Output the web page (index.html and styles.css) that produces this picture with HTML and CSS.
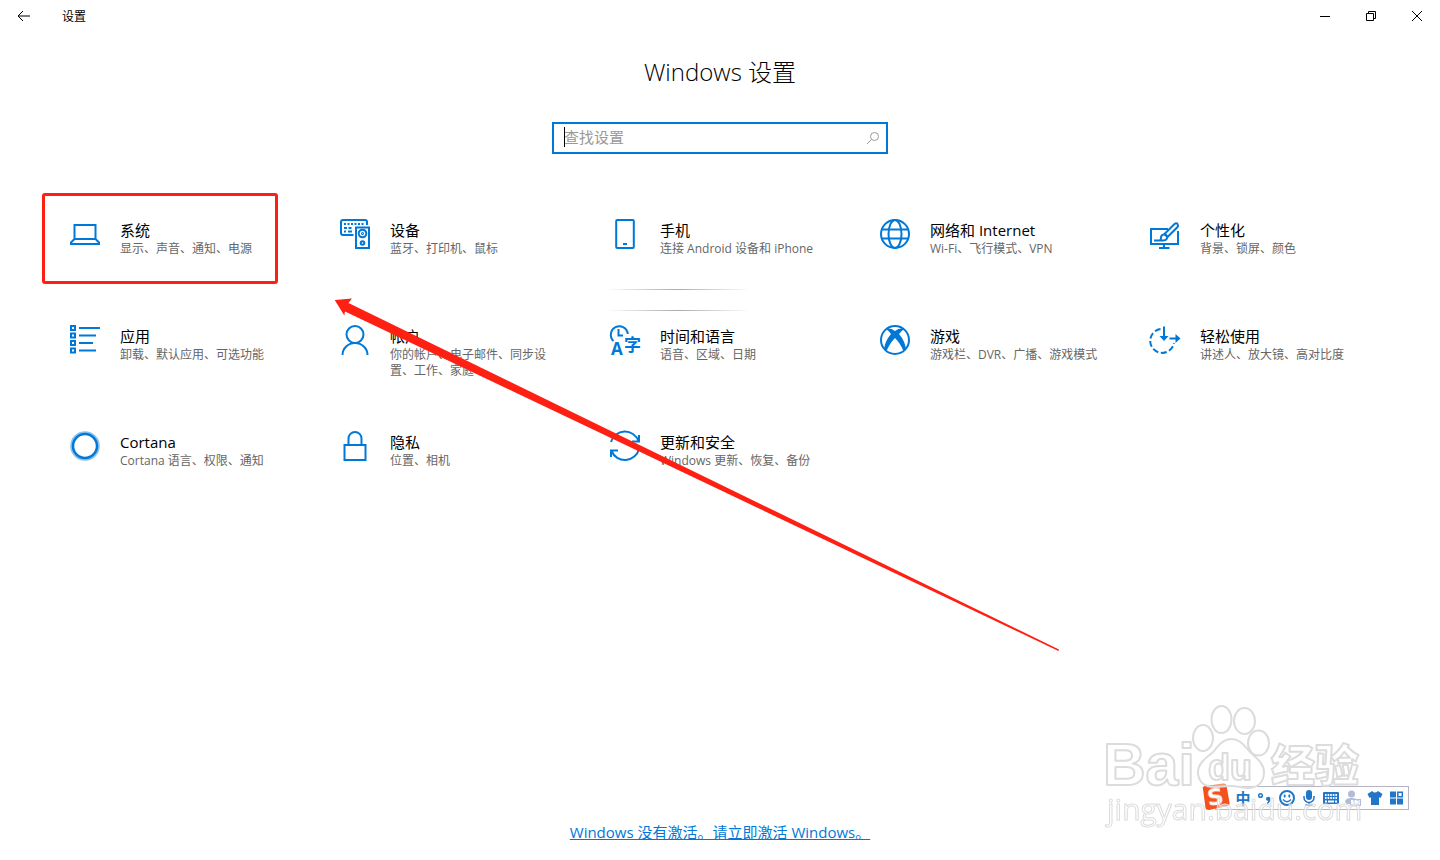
FILE: index.html
```
<!DOCTYPE html>
<html lang="zh-CN">
<head>
  <meta charset="UTF-8">
  <meta name="viewport" content="width=device-width, initial-scale=1">
  <title>设置</title>
  <link rel="stylesheet" href="styles.css">
</head>
<body>
  <header class="title-bar">
    <button class="back-btn" aria-label="返回">
      <svg width="14" height="12" viewBox="0 0 14 12"><path d="M1 6h12M6 1L1 6l5 5"/></svg>
    </button>
    <span class="window-title">设置</span>
    <div class="window-actions">
      <button aria-label="最小化"><svg width="10" height="10" viewBox="0 0 10 10"><path d="M0 5.5h10"/></svg></button>
      <button aria-label="还原"><svg width="10" height="10" viewBox="0 0 10 10"><path d="M.5 2.5h7v7h-7zM2.5 2.5v-2h7v7h-2"/></svg></button>
      <button aria-label="关闭"><svg width="10" height="10" viewBox="0 0 10 10"><path d="M0 0l10 10M10 0L0 10"/></svg></button>
    </div>
  </header>

  <main class="settings">
    <h1>Windows 设置</h1>
    <div class="search-box">
      <input type="text" placeholder="查找设置" aria-label="查找设置">
      <span class="caret"></span>
      <svg class="search-icon" width="12" height="12" viewBox="0 0 12 12"><circle cx="7.5" cy="4.5" r="4"/><path d="M4.5 7.5L0 12"/></svg>
    </div>

    <nav class="tile-grid">
      <a class="tile marked" href="#system">
        <svg class="icon" viewBox="0 0 30 30"><path d="M4.5 6h21v14h-21zM4.5 20L1 23.5V25h28v-1.5L25.5 20"/></svg>
        <span class="tile-text"><span class="tile-title">系统</span><span class="tile-desc">显示、声音、通知、电源</span></span>
      </a>
      <a class="tile" href="#devices">
        <svg class="icon" viewBox="0 0 30 30">
          <path d="M13.5 16H3a2 2 0 0 1-2-2V3a2 2 0 0 1 2-2h22a2 2 0 0 1 2 2v3"/>
          <path d="M4 5h21" stroke-dasharray="2 1.5"/>
          <path d="M4 9h3M8.5 9h3M4 12.5h2M8 12.5h4"/>
          <path d="M16 8.5h13V29H16z"/>
          <circle cx="22.5" cy="14.5" r="3.8"/><circle cx="22.5" cy="14.5" r=".5"/>
          <circle cx="22.5" cy="24" r="1.8"/>
        </svg>
        <span class="tile-text"><span class="tile-title">设备</span><span class="tile-desc">蓝牙、打印机、鼠标</span></span>
      </a>
      <a class="tile" href="#phone">
        <svg class="icon" viewBox="0 0 30 30"><rect x="6.2" y="1" width="17.6" height="28" rx="1"/><path d="M13 25h4"/></svg>
        <span class="tile-text"><span class="tile-title">手机</span><span class="tile-desc">连接 Android 设备和 iPhone</span></span>
      </a>
      <a class="tile" href="#network">
        <svg class="icon" viewBox="0 0 30 30"><circle cx="15" cy="15" r="14"/><ellipse cx="15" cy="15" rx="6.5" ry="14"/><path d="M2 10.5h26M2 19.5h26"/></svg>
        <span class="tile-text"><span class="tile-title">网络和 Internet</span><span class="tile-desc">Wi-Fi、飞行模式、VPN</span></span>
      </a>
      <a class="tile" href="#personal">
        <svg class="icon" viewBox="0 0 30 30">
          <path d="M18 10H1v15h27V12M14 25v4M9 29h10.5"/>
          <path d="M14.5 15L24.5 5q2-1.500 3 0t0 3L17.5 18z"/>
          <path d="M4 21.500h9c4 0 5-3 3.500-5s-5.500-1-5.500 2-1 3-3 3"/>
        </svg>
        <span class="tile-text"><span class="tile-title">个性化</span><span class="tile-desc">背景、锁屏、颜色</span></span>
      </a>

      <a class="tile" href="#apps">
        <svg class="icon" viewBox="0 0 30 30"><path d="M1 1h4v4H1zM1 8.5h4v4H1zM1 16h4v4H1zM1 23.5h4v4H1zM9 3h21M9 10.5h17M9 18h14M9 25.5h17"/></svg>
        <span class="tile-text"><span class="tile-title">应用</span><span class="tile-desc">卸载、默认应用、可选功能</span></span>
      </a>
      <a class="tile" href="#accounts">
        <svg class="icon" viewBox="0 0 30 30"><circle cx="15" cy="9.5" r="8.5"/><path d="M2.5 30a12.5 12 0 0 1 25 0"/></svg>
        <span class="tile-text"><span class="tile-title">帐户</span><span class="tile-desc">你的帐户、电子邮件、同步设置、工作、家庭</span></span>
      </a>
      <a class="tile" href="#time">
        <svg class="icon" viewBox="0 0 30 30">
          <path d="M3.5 16A8.5 8.5 0 1 1 17.8 9M8.5 4v6.5H13"/>
          <text x="1" y="30" font-size="17">A</text><text x="14" y="26" font-size="17">字</text>
        </svg>
        <span class="tile-text"><span class="tile-title">时间和语言</span><span class="tile-desc">语音、区域、日期</span></span>
      </a>
      <a class="tile" href="#gaming">
        <svg class="icon" viewBox="0 0 30 30">
          <circle cx="15" cy="15" r="14"/>
          <path class="solid" d="M6 4Q10 2.5 15 6Q20 2.5 24 4Q22 5.5 19 9Q25 16 26 24L23.5 26Q20 18 15 13Q10 18 6.5 26L4 24Q5 16 11 9Q8.5 5.5 6 4z"/>
        </svg>
        <span class="tile-text"><span class="tile-title">游戏</span><span class="tile-desc">游戏栏、DVR、广播、游戏模式</span></span>
      </a>
      <a class="tile" href="#ease">
        <svg class="icon" viewBox="0 0 30 30">
          <path d="M10.5 4A12 12 0 1 0 24 18" stroke-dasharray="6 2.6"/>
          <path d="M14 1.5V12M19.5 13.5H28"/>
          <path class="solid" d="M9.500 11h9L14 16zM25.500 9l5 4.500-5 4.500z"/>
        </svg>
        <span class="tile-text"><span class="tile-title">轻松使用</span><span class="tile-desc">讲述人、放大镜、高对比度</span></span>
      </a>

      <a class="tile" href="#cortana">
        <svg class="icon" viewBox="0 0 30 30"><circle cx="15" cy="15" r="13.8" opacity=".45"/><circle cx="15" cy="15" r="12" stroke-width="2.5"/></svg>
        <span class="tile-text"><span class="tile-title">Cortana</span><span class="tile-desc">Cortana 语言、权限、通知</span></span>
      </a>
      <a class="tile" href="#privacy">
        <svg class="icon" viewBox="0 0 30 30"><path d="M4.5 14h21v15h-21zM8.5 14V7.5a6.5 6.5 0 0 1 13 0V14"/></svg>
        <span class="tile-text"><span class="tile-title">隐私</span><span class="tile-desc">位置、相机</span></span>
      </a>
      <a class="tile" href="#update">
        <svg class="icon" viewBox="0 0 30 30"><path d="M1 11A14.5 14.5 0 0 1 28.5 10M29 4v6.5h-7M29 18A14.5 14.5 0 0 1 1.5 20M1 26v-6.5h7"/></svg>
        <span class="tile-text"><span class="tile-title">更新和安全</span><span class="tile-desc">Windows 更新、恢复、备份</span></span>
      </a>

      <span class="shade-lines"></span>
      <svg class="arrow" width="726" height="354" viewBox="335 298 726 354">
        <path d="M334.7 300L352 298.500L348.5 303L1059 649.5L1058.5 651L345 311.500L344.3 315.5z"/>
      </svg>
    </nav>

    <a class="activate" href="#activate">Windows 没有激活。请立即激活 Windows。</a>
  </main>

  <!-- 输入法工具栏 -->
  <div class="ime-bar">
    <svg class="ime-logo" width="28" height="28" viewBox="0 0 28 28">
      <path d="M1 6Q0 3.5 3 3L21 .5q3-.5 3.5 2l3 17q.5 3-2.5 3.500L7 27q-3 .5-3.5-2z"/>
      <text x="5" y="22" transform="rotate(-8 14 14)">S</text>
    </svg>
    <button class="ime-lang">中</button>
    <button aria-label="标点"><svg width="16" height="16" viewBox="0 0 16 16"><circle cx="3.5" cy="5.5" r="1.8" fill="none" stroke="currentColor" stroke-width="1.5"/><path d="M9 9a2.200 2.200 0 1 1 4.400 0q0 3.500-3.400 5v-1.500q1.300-.8 1.300-1.800Q9 11 9 9z"/></svg></button>
    <button aria-label="表情"><svg width="16" height="16" viewBox="0 0 16 16"><circle cx="8" cy="8" r="7" fill="none" stroke="currentColor" stroke-width="2"/><ellipse cx="5.7" cy="6" rx="1" ry="1.8"/><ellipse cx="10.3" cy="6" rx="1" ry="1.8"/><path d="M4 9.5q4 4.5 8 0" fill="none" stroke="currentColor" stroke-width="1.3"/></svg></button>
    <button aria-label="语音"><svg width="16" height="16" viewBox="0 0 16 16"><rect x="5" y="0" width="6" height="10" rx="3"/><path d="M3 6v1.5a5 5 0 0 0 10 0V6M8 12v3M4.5 15h7" fill="none" stroke="currentColor" stroke-width="1.5"/></svg></button>
    <button aria-label="键盘"><svg width="16" height="16" viewBox="0 0 16 16"><rect x="0" y="2" width="16" height="12" rx="1"/><path d="M2 5h12M2 8h12" stroke="#fff" stroke-width="2" stroke-dasharray="1.6 1"/><path d="M2 11.5h2M5 11.5h6M12 11.5h2" stroke="#fff" stroke-width="2"/></svg></button>
    <button class="ime-user" aria-label="用户"><svg width="16" height="16" viewBox="0 0 16 16"><circle cx="6.5" cy="4" r="3.5"/><path d="M0 12q0-4 6.5-4t6.5 4l-2 2H2z"/><rect x="5.5" y="9.5" width="10" height="6" fill="#fff" stroke="currentColor"/><text x="7" y="15" font-size="7">12</text></svg></button>
    <button aria-label="皮肤"><svg width="16" height="16" viewBox="0 0 16 16"><path d="M5 1q3 3 6 0l4.5 3-2 4-1.5-.8V15H4V7.2L2.5 8l-2-4z"/></svg></button>
    <button aria-label="工具箱"><svg width="16" height="16" viewBox="0 0 16 16"><path d="M1 1.500h6v6H1zM1 8.500h6v6H1zM8 8.500h6v6H8z"/><path d="M8.800 2.300h4.500v4.500H8.800z" fill="none" stroke="currentColor" stroke-width="1.5"/></svg></button>
  </div>

  <svg class="watermark" width="270" height="134" viewBox="1100 700 270 134">
    <ellipse cx="1203" cy="738" rx="10" ry="13"/>
    <ellipse cx="1221.5" cy="719.5" rx="10" ry="13.5"/>
    <ellipse cx="1244.5" cy="721" rx="10.5" ry="13"/>
    <ellipse cx="1258.5" cy="743" rx="10.5" ry="12.5"/>
    <path d="M1231 739c-9 0-14 9-18 13s-15 10-15 20c0 11 8 15 16 15 6 0 11-1 17-1s12 2 17 2c9 0 16-5 16-16 0-9-9-15-14-20s-9-13-19-13z"/>
    <text class="wm-bai" x="1103" y="785">Bai</text>
    <text class="wm-du" x="1208" y="780">du</text>
    <text class="wm-cn" x="1271" y="782">经验</text>
    <text class="wm-url" x="1107" y="820">jingyan.baidu.com</text>
  </svg>
</body>
</html>
```

FILE: styles.css
```
*,
*::after {
  box-sizing: border-box;
}

body {
  margin: 0;
  min-height: 100vh;
  display: flex;
  flex-direction: column;
  font-family: "Open Sans", "Noto Sans CJK SC", sans-serif;
  font-size: 12px;
  color: #000;
  background: #fff;
}

button {
  padding: 0;
  border: none;
  background: none;
  font: inherit;
  color: inherit;
}

/* 标题栏 */
.title-bar {
  display: flex;
  align-items: center;
  height: 32px;
}

.title-bar button {
  display: flex;
  align-items: center;
  justify-content: center;
  width: 46px;
  height: 32px;
}

.title-bar svg {
  fill: none;
  stroke: #000;
}

.title-bar .back-btn {
  width: 48px;
}

.window-title {
  margin-left: 14px;
}

.window-actions {
  display: flex;
  margin-left: auto;
}

/* 主体 */
.settings {
  flex: 1;
  display: flex;
  flex-direction: column;
  align-items: center;
  padding: 24px 0 18px;
}

h1 {
  margin: 0 0 34px;
  font-size: 24px;
  font-weight: 300;
  line-height: 32px;
}

/* 搜索框 */
.search-box {
  position: relative;
  width: 336px;
  max-width: 90%;
}

.search-box input {
  display: block;
  width: 100%;
  height: 32px;
  padding: 0 32px 2px 10px;
  border: 2px solid #0078d7;
  outline: none;
  font-family: inherit;
  font-size: 15px;
}

.search-box input::placeholder {
  color: #999;
}

.caret {
  position: absolute;
  left: 12px;
  top: 5px;
  width: 1px;
  height: 20px;
  background: #000;
}

.search-icon {
  position: absolute;
  right: 9px;
  top: 10px;
  fill: none;
  stroke: #999;
}

/* 设置分类 */
.tile-grid {
  position: relative;
  display: grid;
  grid-template-columns: repeat(auto-fill, 270px);
  grid-auto-rows: 106px;
  width: 100%;
  max-width: 1350px;
  margin-top: 40px;
}

.tile {
  position: relative;
  display: flex;
  gap: 20px;
  padding: 25px 20px 0 25px;
  color: #000;
  text-decoration: none;
}

.tile.marked::after {
  content: "";
  position: absolute;
  left: -3px;
  top: -1px;
  width: 236px;
  height: 91px;
  border: 3px solid #ff2014;
  border-radius: 3px;
}

.icon {
  flex: none;
  width: 30px;
  height: 30px;
  overflow: visible;
  fill: none;
  stroke: #0078d7;
  stroke-width: 2;
}

.icon text,
.icon .solid {
  fill: #0078d7;
  stroke: none;
}

.icon text {
  font-weight: 700;
}

.tile-text {
  display: flex;
  flex-direction: column;
}

.tile-title {
  font-size: 15px;
  line-height: 22px;
}

.tile-desc {
  line-height: 16px;
  color: #666;
}

/* 标注 */
.shade-lines {
  position: absolute;
  left: 561px;
  top: 95px;
  width: 144px;
  height: 22px;
  background:
    linear-gradient(90deg, transparent, #aaa 50%, transparent) top / 100% 1px no-repeat,
    linear-gradient(90deg, transparent, #aaa 50%, transparent) bottom / 100% 1px no-repeat;
}

.arrow {
  position: absolute;
  left: 290px;
  top: 104px;
  fill: #ff2014;
  pointer-events: none;
}

.activate {
  margin-top: auto;
  font-size: 15px;
  line-height: 20px;
  color: #0078d7;
}

/* 输入法工具栏 */
.ime-bar {
  position: fixed;
  right: 31px;
  bottom: 50px;
  display: flex;
  align-items: center;
  height: 24px;
  padding-left: 16px;
  border: 1px solid #b4b4c3;
  background: #fff;
  color: #2176c7;
}

.ime-bar button {
  display: flex;
  align-items: center;
  justify-content: center;
  width: 22px;
  height: 22px;
}

.ime-bar svg {
  fill: currentColor;
}

.ime-bar .ime-lang {
  padding-bottom: 2px;
  font-size: 15px;
  font-weight: 700;
}

.ime-bar .ime-user {
  color: #b0bcd8;
}

.ime-bar .ime-logo {
  position: absolute;
  left: -14px;
  top: -4px;
  overflow: visible;
  fill: #f4511e;
}

.ime-logo text {
  font-family: "DejaVu Sans", sans-serif;
  font-size: 23px;
  font-weight: 700;
  fill: #fff;
}

/* 水印 */
.watermark {
  position: fixed;
  right: 70px;
  bottom: 26px;
  overflow: visible;
  fill: #fff;
  fill-opacity: 0.4;
  stroke: #dcdcdc;
  stroke-width: 2;
  stroke-linejoin: round;
  pointer-events: none;
}

.wm-bai,
.wm-du {
  font-family: "Liberation Sans", Arial, sans-serif;
  font-weight: 700;
}

.wm-bai {
  font-size: 59px;
}

.wm-du {
  font-size: 36px;
}

.wm-cn {
  font-size: 44px;
  font-weight: 900;
}

.wm-url {
  font-size: 30px;
  stroke-width: 1;
}
```
